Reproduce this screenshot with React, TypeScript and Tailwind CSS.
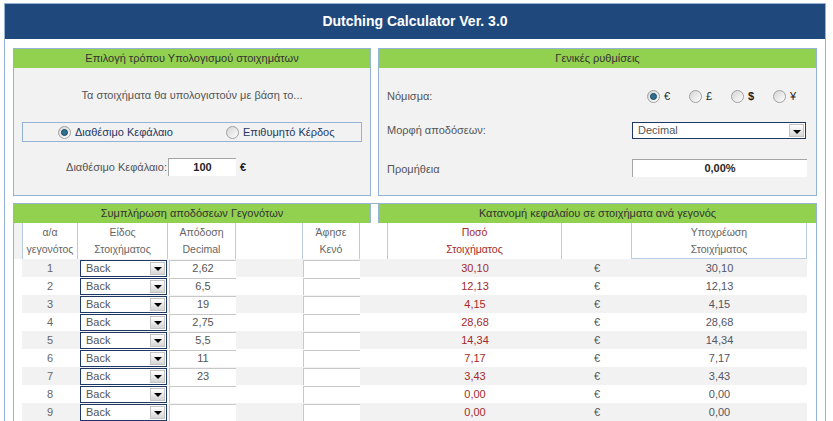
import { ReactNode } from "react";

const rows = [
  { odds: "2,62", stake: "30,10" },
  { odds: "6,5", stake: "12,13" },
  { odds: "19", stake: "4,15" },
  { odds: "2,75", stake: "28,68" },
  { odds: "5,5", stake: "14,34" },
  { odds: "11", stake: "7,17" },
  { odds: "23", stake: "3,43" },
  { odds: "", stake: "0,00" },
  { odds: "", stake: "0,00" },
];

function Radio({ on }: { on?: boolean }) {
  return (
    <span className="flex h-[13px] w-[13px] shrink-0 items-center justify-center rounded-full border border-[#a0a0a0] bg-linear-to-br from-[#d4d4d4] to-[#ffffff]">
      {on && <span className="h-[7px] w-[7px] rounded-full border border-[#1b4660] bg-[#2f6f8f]" />}
    </span>
  );
}

function Arrow() {
  return (
    <span className="flex h-[13px] w-[15px] shrink-0 items-center justify-center border border-[#c4c4c4] bg-linear-to-b from-[#ffffff] to-[#d6d6d6]">
      <span className="mt-[2px] h-0 w-0 border-x-[4px] border-t-[4px] border-x-transparent border-t-black" />
    </span>
  );
}

function Select({ value, className }: { value: string; className: string }) {
  return (
    <div className={`flex items-center justify-between border border-[#1f3864] bg-white pl-[5px] pr-[1px] ${className}`}>
      <span>{value}</span>
      <Arrow />
    </div>
  );
}

function Panel({ title, className, children }: { title: string; className: string; children: ReactNode }) {
  return (
    <div className={`flex flex-col border border-[#95b3d7] bg-[#f2f2f2] ${className}`}>
      <div className="flex h-[19px] items-center justify-center bg-[#92d050] text-[#333333]">{title}</div>
      {children}
    </div>
  );
}

export default function App() {
  return (
    <div className="h-[421px] w-[833px] overflow-hidden bg-white pl-[4px] pt-[3px] font-['Liberation_Sans',Arial,sans-serif] text-[11px] text-[#555555]">
      <div className="h-[430px] w-[822px] border-x border-t border-[#95b3d7]">
        <div className="flex h-[35px] items-center justify-center bg-[#1f497d] text-[14px] font-bold text-white">
          Dutching Calculator Ver. 3.0
        </div>

        <div className="pl-[8px] pt-[9px]">
          {/* top panels */}
          <div className="flex gap-[7px]">
            <Panel title="Επιλογή τρόπου Υπολογισμού στοιχημάτων" className="h-[148px] w-[358px]">
              <div className="flex h-[54px] items-center justify-center">
                Τα στοιχήματα θα υπολογιστούν με βάση το...
              </div>
              <div className="mx-[8px] grid h-[20px] grid-cols-2 items-center border border-[#95b3d7] text-[#1f3864]">
                <div className="flex items-center gap-[4px] pl-[35px]">
                  <Radio on />
                  <span>Διαθέσιμο Κεφάλαιο</span>
                </div>
                <div className="flex items-center gap-[4px] pl-[34px]">
                  <Radio />
                  <span>Επιθυμητό Κέρδος</span>
                </div>
              </div>
              <div className="mt-[16px] flex h-[18px] items-center">
                <span className="w-[154px] pr-[1px] text-right">Διαθέσιμο Κεφάλαιο:</span>
                <div className="flex h-[18px] w-[68px] items-center justify-center border-l border-t border-[#a5a5a5] bg-white font-bold text-[#1f1f1f]">
                  100
                </div>
                <span className="ml-[4px] font-bold text-[#1f1f1f]">€</span>
              </div>
            </Panel>

            <Panel title="Γενικές ρυθμίσεις" className="h-[148px] w-[439px]">
              <div className="mt-[18px] flex h-[20px] items-center pl-[8px]">
                <span className="w-[245px]">Νόμισμα:</span>
                <div className="flex items-center pl-[15px] text-[#1f1f1f]">
                  {["€", "£", "$", "¥"].map((c, i) => (
                    <div key={c} className="flex w-[42px] items-center gap-[4px]">
                      <Radio on={i === 0} />
                      <span className={c === "$" ? "font-bold" : ""}>{c}</span>
                    </div>
                  ))}
                </div>
              </div>
              <div className="mt-[16px] flex h-[17px] items-center pl-[8px]">
                <span className="w-[245px]">Μορφή αποδόσεων:</span>
                <Select value="Decimal" className="h-[17px] w-[174px]" />
              </div>
              <div className="mt-[20px] flex h-[18px] items-center pl-[8px]">
                <span className="w-[245px] pt-[3px]">Προμήθεια</span>
                <div className="flex h-[18px] w-[175px] items-center justify-center border-l border-t border-[#a5a5a5] bg-white font-bold text-[#1f1f1f]">
                  0,00%
                </div>
              </div>
            </Panel>
          </div>

          {/* bottom tables */}
          <div className="mt-[7px] w-[804px] border-x border-t border-[#95b3d7]">
            <div className="flex h-[19px] text-[#333333]">
              <div className="flex w-[357px] items-center justify-center border-r border-[#95b3d7] bg-[#92d050]">
                Συμπλήρωση αποδόσεων Γεγονότων
              </div>
              <div className="w-[8px] border-r border-[#95b3d7] bg-white" />
              <div className="flex flex-1 items-center justify-center bg-[#92d050]">
                Κατανομή κεφαλαίου σε στοιχήματα ανά γεγονός
              </div>
            </div>

            <div className="flex h-[36px] text-center text-[10.5px] leading-[17px] text-[#666666]">
              <div className="w-[8px] bg-[#f2f2f2]" />
              <div className="flex w-[56px] items-center justify-center border-x border-[#b8cce4]">
                α/α<br />γεγονότος
              </div>
              <div className="flex w-[90px] items-center justify-center border-r border-[#b8cce4]">
                Είδος<br />Στοιχήματος
              </div>
              <div className="flex w-[68px] items-center justify-center border-r border-[#b8cce4]">
                Απόδοση<br />Decimal
              </div>
              <div className="w-[67px] border-r border-[#b8cce4]" />
              <div className="flex w-[57px] items-center justify-center border-r border-[#b8cce4]">
                Άφησε<br />Κενό
              </div>
              <div className="w-[28px] border-r border-[#b8cce4]" />
              <div className="flex w-[174px] items-center justify-center border-r border-[#b8cce4] text-[#a52a2a]">
                Ποσό<br />Στοιχήματος
              </div>
              <div className="w-[70px] border-r border-[#b8cce4]" />
              <div className="flex w-[175px] items-center justify-center border-b border-r border-[#b8cce4]">
                Υποχρέωση<br />Στοιχήματος
              </div>
            </div>

            {rows.map((r, i) => (
              <div key={i} className="flex h-[18px] pl-[8px]">
                <div className={`flex w-[785px] items-center text-center ${i % 2 === 0 ? "bg-[#f2f2f2]" : "bg-white"}`}>
                  <div className="w-[56px] text-[#666666]">{i + 1}</div>
                  <div className="w-[90px] pl-[2px]">
                    <Select value="Back" className="h-[17px] w-[87px] text-left text-[#555555]" />
                  </div>
                  <div className="w-[68px] pl-[1px]">
                    <div className="flex h-[17px] w-[67px] items-center justify-center border-l border-t border-[#c8c8c8] bg-white text-[#555555]">
                      {r.odds}
                    </div>
                  </div>
                  <div className="w-[67px]" />
                  <div className="w-[57px]">
                    <div className="h-[17px] w-[57px] border-l border-t border-[#c8c8c8] bg-white" />
                  </div>
                  <div className="w-[28px]" />
                  <div className="w-[174px] text-[#a52a2a]">{r.stake}</div>
                  <div className="w-[70px] text-[#555555]">€</div>
                  <div className="w-[175px] text-[#555566]">{r.stake}</div>
                </div>
              </div>
            ))}
          </div>
        </div>
      </div>
    </div>
  );
}
